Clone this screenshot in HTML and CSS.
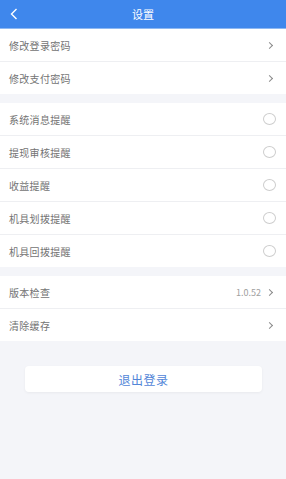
FILE: index.html
```html
<!DOCTYPE html>
<html lang="zh-CN">
<head>
  <meta charset="UTF-8">
  <title>设置</title>
  <link rel="stylesheet" href="styles.css">
</head>
<body>
  <div class="header">
    <svg class="back" width="8" height="12" viewBox="0 0 8 12"><path d="M6.5 1 L1.5 6 L6.5 11" fill="none" stroke="#fff" stroke-width="1.4"/></svg>
    <div class="title">设置</div>
  </div>

  <div class="group">
    <div class="row"><span class="label">修改登录密码</span><span class="arrow"></span></div>
    <div class="row"><span class="label">修改支付密码</span><span class="arrow"></span></div>
  </div>

  <div class="group">
    <div class="row"><span class="label">系统消息提醒</span><span class="radio"></span></div>
    <div class="row"><span class="label">提现审核提醒</span><span class="radio"></span></div>
    <div class="row"><span class="label">收益提醒</span><span class="radio"></span></div>
    <div class="row"><span class="label">机具划拨提醒</span><span class="radio"></span></div>
    <div class="row"><span class="label">机具回拨提醒</span><span class="radio"></span></div>
  </div>

  <div class="group">
    <div class="row"><span class="label">版本检查</span><span class="value">1.0.52</span><span class="arrow"></span></div>
    <div class="row"><span class="label">清除缓存</span><span class="arrow"></span></div>
  </div>

  <div class="logout">退出登录</div>
</body>
</html>
```

FILE: styles.css
```css
body {
  margin: 0;
  background: #f4f5f9;
  font-family: "Noto Sans CJK SC", "Noto Sans", sans-serif;
  height: 479px;
}
.header {
  height: 28px;
  background: #3f87ec;
  border-bottom: 1px solid #8db8f3;
  display: flex;
  align-items: center;
  justify-content: center;
  position: relative;
}
.back {
  position: absolute;
  left: 10px;
  top: 8px;
}
.title {
  color: #fff;
  font-size: 11px;
}
.group {
  background: #fff;
  margin-bottom: 9px;
}
.row {
  height: 32px;
  display: flex;
  align-items: center;
  padding: 0 11px 0 9px;
  border-bottom: 1px solid #eeeff2;
}
.row:last-child {
  border-bottom: none;
}
.label {
  flex: 1;
  font-size: 10px;
  letter-spacing: 0.3px;
  color: #737373;
}
.value {
  font-size: 9px;
  color: #a0a0a0;
  margin-right: 6px;
}
.arrow {
  width: 4px;
  height: 4px;
  border-top: 1px solid #8a8a8a;
  border-right: 1px solid #8a8a8a;
  transform: rotate(45deg);
  margin-right: 3px;
}
.radio {
  width: 11px;
  height: 10px;
  border: 1px solid #cdcdcd;
  border-radius: 50%;
  margin-right: -1px;
}
.logout {
  margin: 25px 24px 0 25px;
  height: 26px;
  background: #fff;
  border-radius: 4px;
  box-shadow: 0 1px 3px rgba(0,0,0,0.05);
  display: flex;
  align-items: center;
  justify-content: center;
  color: #5286d8;
  font-size: 12px;
  letter-spacing: 0.5px;
}
```
